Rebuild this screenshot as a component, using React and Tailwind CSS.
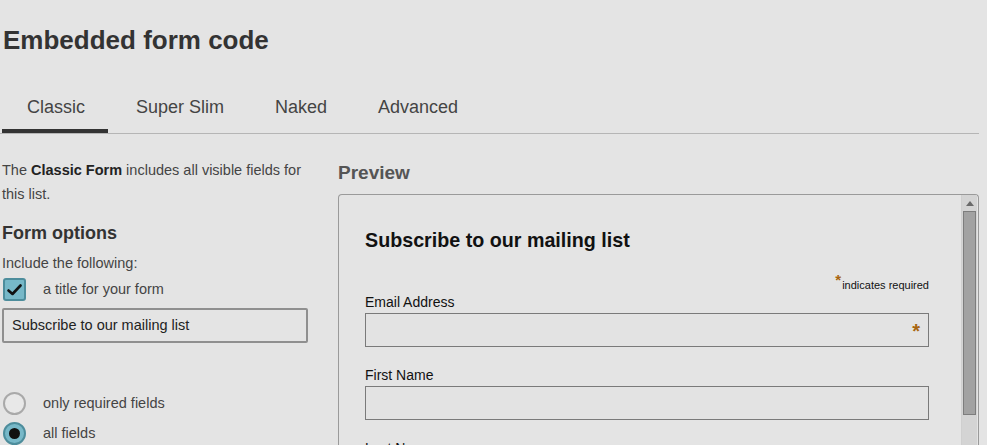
import React from 'react';

const tabs = ['Classic', 'Super Slim', 'Naked', 'Advanced'];

const Field = ({ label, required }) => (
  <div className="mb-[19px]">
    <div className="mb-[2px] text-[14px] leading-[18px] text-[#111]">{label}</div>
    <div className="relative h-[34px] border border-[#7a7a7a] bg-[#e3e3e3]">
      {required && (
        <span className="absolute right-[8px] top-[5px] text-[20px] font-bold leading-[24px] text-[#a8650f]">*</span>
      )}
    </div>
  </div>
);

export default function App() {
  return (
    <div className="h-[445px] w-[987px] overflow-hidden bg-[#e4e4e4] font-['Liberation_Sans',Arial,sans-serif] text-[#333]">
      <h1 className="pl-[3px] pt-[24px] text-[26px] font-bold leading-[32px] text-[#333]">Embedded form code</h1>

      {/* Tabs */}
      <div className="mt-[38px] mr-[8px] flex border-b border-[#b5b5b5]">
        {tabs.map((t, i) => (
          <div
            key={t}
            className={
              'text-[18px] leading-[22px] text-[#444] ' +
              (i === 0 ? 'ml-[2px] w-[106px] border-b-[4px] border-[#333] pt-[2px] pb-[11px] pl-[25px]' : 'mb-[3px] pt-[2px] pb-[12px]') +
              (i === 1 ? ' pl-[28px] pr-[51px]' : '') +
              (i === 2 ? ' pr-[51px]' : '')
            }
          >
            {t}
          </div>
        ))}
      </div>

      <div className="flex">
        {/* Left options */}
        <div className="w-[338px] shrink-0 pl-[2px] pr-[30px] pt-[24px]">
          <p className="text-[14.5px] leading-[24px] text-[#444]">
            The <b className="text-[#222]">Classic Form</b> includes all visible fields for this list.
          </p>
          <h2 className="mt-[16px] text-[18px] font-bold leading-[22px] text-[#333]">Form options</h2>
          <div className="mt-[10px] text-[14.5px] leading-[18px] text-[#444]">Include the following:</div>
          <label className="mt-[6px] flex items-center gap-[17px]">
            <span className="ml-[1px] flex h-[23px] w-[23px] items-center justify-center rounded-[3px] border-2 border-[#4d8d9c] bg-[#77b8c8]">
              <svg width="15" height="12" viewBox="0 0 15 12">
                <path d="M1.5 6.5 L5.5 10 L13.5 1.5" fill="none" stroke="#111" strokeWidth="2.6" strokeLinecap="round" strokeLinejoin="round" />
              </svg>
            </span>
            <span className="text-[14.5px] text-[#444]">a title for your form</span>
          </label>
          <div className="mt-[7px] flex h-[35px] items-center rounded-[2px] border-2 border-[#8f8f8f] px-[8px] text-[14.5px] text-[#222]">
            Subscribe to our mailing list
          </div>

          <div className="mt-[49px] flex flex-col gap-[7px]">
            <label className="flex items-center gap-[17px]">
              <span className="ml-[1px] h-[23px] w-[23px] rounded-full border-2 border-[#a9a9a9] bg-[#e8e8e8]" />
              <span className="text-[14.5px] text-[#444]">only required fields</span>
            </label>
            <label className="flex items-center gap-[17px]">
              <span className="ml-[1px] flex h-[23px] w-[23px] items-center justify-center rounded-full border-2 border-[#4d8d9c] bg-[#77b8c8]">
                <span className="h-[11px] w-[11px] rounded-full bg-[#111]" />
              </span>
              <span className="text-[14.5px] text-[#444]">all fields</span>
            </label>
          </div>
        </div>

        {/* Preview */}
        <div className="flex-1 pr-[8px] pt-[28px]">
          <div className="text-[19px] font-bold leading-[22px] text-[#555]">Preview</div>
          <div className="mt-[10px] flex h-[260px] rounded-t-[4px] border border-b-0 border-[#9a9a9a]">
            <div className="flex-1 pl-[26px] pr-[32px] pt-[33px]">
              <h3 className="text-[19.7px] font-bold leading-[24px] text-[#111]">Subscribe to our mailing list</h3>
              <div className="mt-[26px] flex justify-end text-[11px] leading-[14px] text-[#111]">
                <span className="-mt-[5px] mr-[1px] text-[15px] font-bold text-[#a8650f]">*</span>
                <span>indicates required</span>
              </div>
              <div className="mt-[1px]">
                <Field label="Email Address" required />
                <Field label="First Name" />
                <div className="text-[14px] leading-[18px] text-[#111]">Last Name</div>
              </div>
            </div>
            {/* scrollbar */}
            <div className="mr-[1px] flex w-[16px] flex-col border-l border-[#cfcfcf] bg-[#d4d4d4]">
              <div className="flex h-[16px] items-center justify-center">
                <svg width="8" height="5" viewBox="0 0 8 5"><path d="M0 5 L4 0 L8 5 Z" fill="#6a6a6a" /></svg>
              </div>
              <div className="mx-[1px] h-[204px] border border-[#7d7d7d] bg-[#a2a2a2]" />
            </div>
          </div>
        </div>
      </div>
    </div>
  );
}
